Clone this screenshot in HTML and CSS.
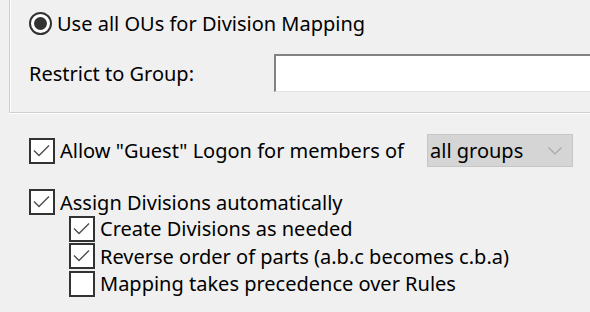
FILE: index.html
```html
<!DOCTYPE html>
<html>
<head>
<meta charset="utf-8">
<link rel="stylesheet" href="styles.css">
</head>
<body>
<div class="page">
  <div class="group">
    <div class="row radio-row">
      <span class="radio"><span class="dot"></span></span>
      <span class="label">Use all OUs for Division Mapping</span>
    </div>
    <div class="row restrict-row">
      <span class="field-label">Restrict to Group:</span>
      <span class="textbox"></span>
    </div>
  </div>

  <div class="row guest-row">
    <span class="check on"><svg viewBox="0 0 22 22"><path d="M3 10.5 L8 15.5 L18 5.5"/></svg></span>
    <span class="label">Allow "Guest" Logon for members of</span>
    <span class="select">
      <span class="select-text">all groups</span>
      <svg class="chev" viewBox="0 0 14 8"><path d="M0.5 0.5 L7 7 L13.5 0.5"/></svg>
    </span>
  </div>

  <div class="row assign-row">
    <span class="check on"><svg viewBox="0 0 22 22"><path d="M3 10.5 L8 15.5 L18 5.5"/></svg></span>
    <span class="label">Assign Divisions automatically</span>
  </div>

  <div class="sub">
    <div class="row sub-row">
      <span class="check on"><svg viewBox="0 0 22 22"><path d="M3 10.5 L8 15.5 L18 5.5"/></svg></span>
      <span class="label">Create Divisions as needed</span>
    </div>
    <div class="row sub-row">
      <span class="check on"><svg viewBox="0 0 22 22"><path d="M3 10.5 L8 15.5 L18 5.5"/></svg></span>
      <span class="label">Reverse order of parts (a.b.c becomes c.b.a)</span>
    </div>
    <div class="row sub-row">
      <span class="check"></span>
      <span class="label">Mapping takes precedence over Rules</span>
    </div>
  </div>
</div>
</body>
</html>
```
FILE: styles.css
```css
html, body {
  margin: 0;
  padding: 0;
  background: #f0f0f0;
  overflow: hidden;
}
body {
  width: 590px;
  height: 312px;
  font-family: "Noto Sans", "Open Sans", sans-serif;
  font-size: 20px;
  color: #000;
}
.page {
  display: flex;
  flex-direction: column;
}
.row {
  display: flex;
  align-items: center;
}
.group {
  margin-left: 9px;
  margin-right: -20px;
  height: 112px;
  border-left: 1px solid #d0d0d0;
  border-bottom: 1px solid #d0d0d0;
  box-shadow: inset 1px 0 #fff, 0 1px #fff;
  padding-left: 19px;
  display: flex;
  flex-direction: column;
}
.radio-row {
  margin-top: 12px;
  height: 23px;
}
.radio {
  box-sizing: border-box;
  width: 23px;
  height: 23px;
  border: 2px solid #333;
  border-radius: 50%;
  background: #fff;
  display: flex;
  align-items: center;
  justify-content: center;
  flex: none;
}
.dot {
  width: 13px;
  height: 13px;
  border-radius: 50%;
  background: #333;
}
.label {
  margin-left: 5px;
  white-space: nowrap;
}
.restrict-row {
  margin-top: 19px;
  height: 38px;
}
.field-label {
  width: 245px;
  flex: none;
  white-space: nowrap;
}
.textbox {
  flex: 1;
  box-sizing: border-box;
  height: 38px;
  background: #fff;
  border-top: 2px solid #838383;
  border-left: 2px solid #838383;
  border-bottom: 1px solid #e3e3e3;
}
.guest-row {
  margin-top: 21px;
  height: 33px;
  padding-left: 29px;
}
.check {
  box-sizing: border-box;
  width: 26px;
  height: 26px;
  border: 2px solid #333;
  background: #fff;
  flex: none;
  display: flex;
}
.check svg {
  width: 22px;
  height: 22px;
  fill: none;
  stroke: #4d4d4d;
  stroke-width: 1.4;
}
.select {
  margin-left: auto;
  margin-right: 17px;
  width: 146px;
  height: 33px;
  box-sizing: border-box;
  background: #d5d5d5;
  border: 1px solid #c6c6c6;
  display: flex;
  align-items: center;
  padding-left: 2px;
}
.select-text {
  flex: 1;
}
.chev {
  width: 14px;
  height: 8px;
  margin-right: 10px;
  fill: none;
  stroke: #a8a8a8;
  stroke-width: 1.2;
}
.assign-row {
  margin-top: 22px;
  height: 26px;
  padding-left: 29px;
}
.sub {
  display: flex;
  flex-direction: column;
  padding-left: 69px;
}
.sub-row {
  height: 27.5px;
}
```
